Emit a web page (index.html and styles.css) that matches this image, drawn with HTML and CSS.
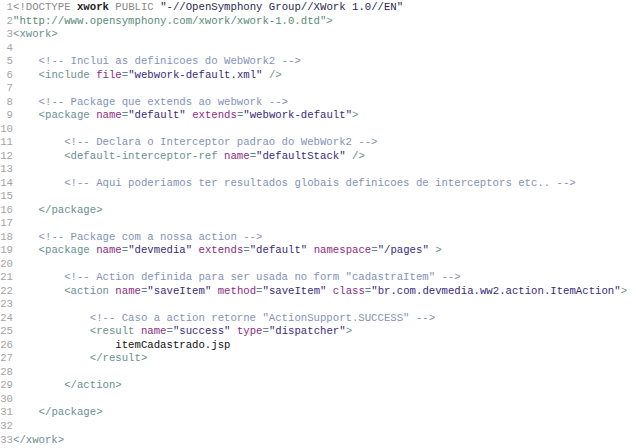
FILE: index.html
```html
<!DOCTYPE html>
<html>
<head>
<meta charset="utf-8">
<link rel="stylesheet" href="styles.css">
</head>
<body>
<div class="code">
<div class="ln"><span class="n">1</span><span class="c"><span class="dt">&lt;!DOCTYPE</span> <span class="dn">xwork</span> <span class="dt">PUBLIC</span> <span class="pid">"-//OpenSymphony Group//XWork 1.0//EN"</span></span></div>
<div class="ln"><span class="n">2</span><span class="c"><span class="sid">"http://www.opensymphony.com/xwork/xwork-1.0.dtd"</span><span class="t">&gt;</span></span></div>
<div class="ln"><span class="n">3</span><span class="c"><span class="t">&lt;xwork&gt;</span></span></div>
<div class="ln"><span class="n">4</span><span class="c"></span></div>
<div class="ln"><span class="n">5</span><span class="c">    <span class="cm">&lt;!-- Inclui as definicoes do WebWork2 --&gt;</span></span></div>
<div class="ln"><span class="n">6</span><span class="c">    <span class="t">&lt;include</span> <span class="a">file</span>=<span class="v">"webwork-default.xml"</span> <span class="t">/&gt;</span></span></div>
<div class="ln"><span class="n">7</span><span class="c"></span></div>
<div class="ln"><span class="n">8</span><span class="c">    <span class="cm">&lt;!-- Package que extends ao webwork --&gt;</span></span></div>
<div class="ln"><span class="n">9</span><span class="c">    <span class="t">&lt;package</span> <span class="a">name</span>=<span class="v">"default"</span> <span class="a">extends</span>=<span class="v">"webwork-default"</span><span class="t">&gt;</span></span></div>
<div class="ln"><span class="n">10</span><span class="c"></span></div>
<div class="ln"><span class="n">11</span><span class="c">        <span class="cm">&lt;!-- Declara o Interceptor padrao do WebWork2 --&gt;</span></span></div>
<div class="ln"><span class="n">12</span><span class="c">        <span class="t">&lt;default-interceptor-ref</span> <span class="a">name</span>=<span class="v">"defaultStack"</span> <span class="t">/&gt;</span></span></div>
<div class="ln"><span class="n">13</span><span class="c"></span></div>
<div class="ln"><span class="n">14</span><span class="c">        <span class="cm">&lt;!-- Aqui poderiamos ter resultados globais definicoes de interceptors etc.. --&gt;</span></span></div>
<div class="ln"><span class="n">15</span><span class="c"></span></div>
<div class="ln"><span class="n">16</span><span class="c">    <span class="t">&lt;/package&gt;</span></span></div>
<div class="ln"><span class="n">17</span><span class="c"></span></div>
<div class="ln"><span class="n">18</span><span class="c">    <span class="cm">&lt;!-- Package com a nossa action --&gt;</span></span></div>
<div class="ln"><span class="n">19</span><span class="c">    <span class="t">&lt;package</span> <span class="a">name</span>=<span class="v">"devmedia"</span> <span class="a">extends</span>=<span class="v">"default"</span> <span class="a">namespace</span>=<span class="v">"/pages"</span> <span class="t">&gt;</span></span></div>
<div class="ln"><span class="n">20</span><span class="c"></span></div>
<div class="ln"><span class="n">21</span><span class="c">        <span class="cm">&lt;!-- Action definida para ser usada no form "cadastraItem" --&gt;</span></span></div>
<div class="ln"><span class="n">22</span><span class="c">        <span class="t">&lt;action</span> <span class="a">name</span>=<span class="v">"saveItem"</span> <span class="a">method</span>=<span class="v">"saveItem"</span> <span class="a">class</span>=<span class="v">"br.com.devmedia.ww2.action.ItemAction"</span><span class="t">&gt;</span></span></div>
<div class="ln"><span class="n">23</span><span class="c"></span></div>
<div class="ln"><span class="n">24</span><span class="c">            <span class="cm">&lt;!-- Caso a action retorne "ActionSupport.SUCCESS" --&gt;</span></span></div>
<div class="ln"><span class="n">25</span><span class="c">            <span class="t">&lt;result</span> <span class="a">name</span>=<span class="v">"success"</span> <span class="a">type</span>=<span class="v">"dispatcher"</span><span class="t">&gt;</span></span></div>
<div class="ln"><span class="n">26</span><span class="c">                <span class="tx">itemCadastrado.jsp</span></span></div>
<div class="ln"><span class="n">27</span><span class="c">            <span class="t">&lt;/result&gt;</span></span></div>
<div class="ln"><span class="n">28</span><span class="c"></span></div>
<div class="ln"><span class="n">29</span><span class="c">        <span class="t">&lt;/action&gt;</span></span></div>
<div class="ln"><span class="n">30</span><span class="c"></span></div>
<div class="ln"><span class="n">31</span><span class="c">    <span class="t">&lt;/package&gt;</span></span></div>
<div class="ln"><span class="n">32</span><span class="c"></span></div>
<div class="ln"><span class="n">33</span><span class="c"><span class="t">&lt;/xwork&gt;</span></span></div>
</div>
</body>
</html>
```

FILE: styles.css
```css
html, body {
  margin: 0;
  padding: 0;
  background: #ffffff;
}

.code {
  font-family: "Courier New", "Nimbus Mono PS", "Nimbus Mono L", "FreeMono", "Liberation Mono", monospace;
  font-size: 10.67px;
  line-height: 13.53px;
  color: #5f8a8a;
  padding-top: 1px;
}

.ln {
  display: flex;
  height: 13.53px;
  white-space: pre;
}

.n {
  width: 13px;
  flex: none;
  text-align: right;
  color: #a4a4a4;
}

.c {
  white-space: pre;
}

.t { color: #6a9090; }
.a { color: #8a2c82; }
.v { color: #3a2a78; }
.cm { color: #8492b8; }
.dt { color: #8a8a8a; }
.dn { color: #222222; font-weight: bold; }
.pid { color: #2a2a50; }
.sid { color: #5a8a78; }
.tx { color: #111111; }
```
